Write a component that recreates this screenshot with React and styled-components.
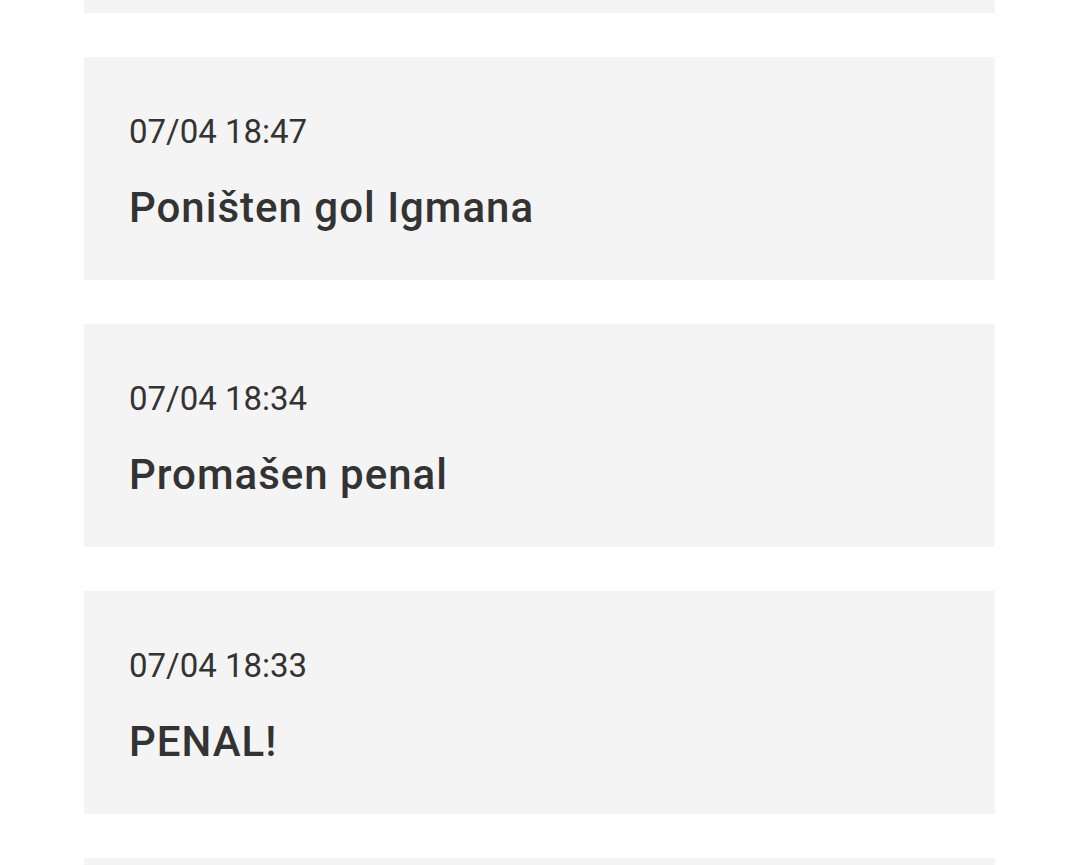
import React from "react";
import styled, { createGlobalStyle } from "styled-components";

const GlobalStyle = createGlobalStyle`
  html, body {
    margin: 0;
    padding: 0;
    background: #ffffff;
  }
  body {
    font-family: Roboto, "Noto Sans", sans-serif;
  }
`;

const events = [
  { time: "07/04 18:47", title: "Poništen gol Igmana" },
  { time: "07/04 18:34", title: "Promašen penal" },
  { time: "07/04 18:33", title: "PENAL!" },
];

export default function App() {
  return (
    <>
      <GlobalStyle />
      <Viewport>
        {/* list is scrolled: only the edges of the cards above and below show */}
        <Feed>
          <Card />
          {events.map((e) => (
            <Card key={e.time}>
              <Time>{e.time}</Time>
              <Title>{e.title}</Title>
            </Card>
          ))}
          <Card />
        </Feed>
      </Viewport>
    </>
  );
}

const Viewport = styled.div`
  height: 865px;
  overflow: hidden;
`;

const Feed = styled.div`
  display: flex;
  flex-direction: column;
  gap: 44px;
  padding: 0 85px 0 84px;
  margin-top: -210px;
`;

const Card = styled.div`
  height: 223px;
  flex-shrink: 0;
  box-sizing: border-box;
  background: #f4f4f4;
  padding: 55px 45px 0;
  display: flex;
  flex-direction: column;
  gap: 31px;
`;

const Time = styled.div`
  font-size: 33px;
  line-height: 40px;
  color: #333333;
`;

const Title = styled.div`
  font-size: 42px;
  line-height: 50px;
  font-weight: 500;
  letter-spacing: 1px;
  color: #333333;
`;
